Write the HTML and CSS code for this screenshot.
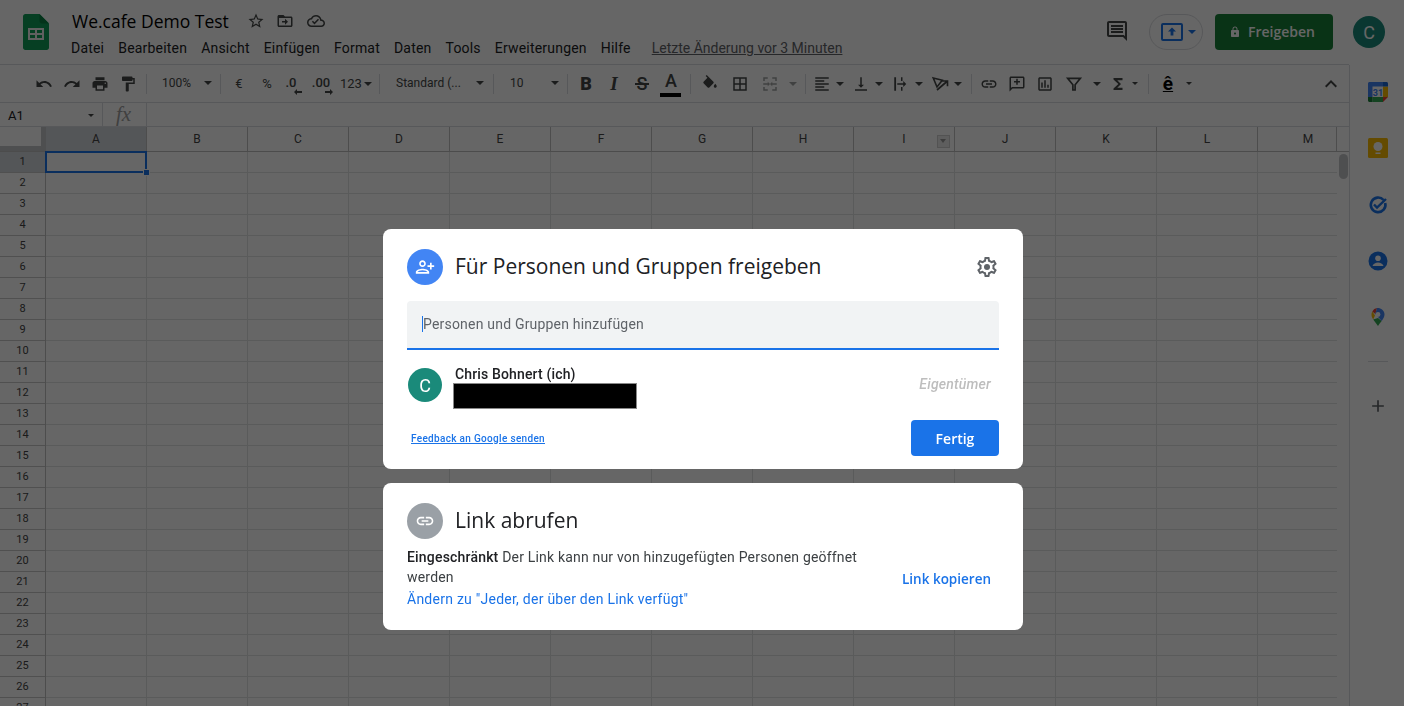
FILE: index.html
```html
<!DOCTYPE html>
<html lang="de">
<head>
    <meta charset="UTF-8">
    <title>We.cafe Demo Test</title>
    <link rel="stylesheet" href="styles.css">
</head>
<body>
<div class="app">
    <div class="main">
        <header class="topbar">
            <svg class="logo" viewBox="0 0 26 36">
                <path fill="#0f9d58" d="M16.5 0H2.4C1 0 0 1 0 2.4v31.2C0 35 1 36 2.4 36h21.2c1.4 0 2.4-1 2.4-2.4V9.500z"/>
                <path fill="#0b8043" d="M16.500 0v7.100c0 1.300 1.100 2.400 2.400 2.400H26z"/>
                <path fill="#f1f1f1" d="M5 14h16v12H5zm2 2v3h5v-3zm7 0v3h5v-3zm-7 5v3h5v-3zm7 0v3h5v-3z" fill-rule="evenodd"/>
            </svg>
            <div class="docinfo">
                <div class="titlerow">
                    <span class="doctitle">We.cafe Demo Test</span>
                    <svg class="ico18 star" viewBox="0 0 24 24"><path d="M22 9.240l-7.190-.62L12 2 9.190 8.630 2 9.240l5.460 4.730L5.820 21 12 17.270 18.180 21l-1.630-7.030L22 9.240zM12 15.400l-3.760 2.270 1-4.280-3.320-2.880 4.380-.38L12 6.100l1.710 4.040 4.380.38-3.320 2.880 1 4.280L12 15.400z"/></svg>
                    <svg class="ico18 move" viewBox="0 0 24 24"><path d="M20 6h-8l-2-2H4c-1.100 0-2 .9-2 2v12c0 1.100.9 2 2 2h16c1.100 0 2-.9 2-2V8c0-1.100-.9-2-2-2zm0 12H4V8h16v10zm-8-1l4-4-4-4v3H8v2h4z"/></svg>
                    <svg class="ico18 cloud" viewBox="0 0 24 24"><path d="M19.350 10.040C18.670 6.590 15.640 4 12 4 9.110 4 6.600 5.640 5.350 8.040 2.340 8.360 0 10.910 0 14c0 3.310 2.690 6 6 6h13c2.760 0 5-2.240 5-5 0-2.640-2.050-4.780-4.650-4.960zM19 18H6c-2.210 0-4-1.790-4-4 0-2.050 1.530-3.760 3.560-3.970l1.070-.11.5-.95C8.080 7.140 9.940 6 12 6c2.620 0 4.880 1.860 5.390 4.430l.3 1.500 1.530.11c1.560.1 2.780 1.410 2.780 2.960 0 1.650-1.350 3-3 3zm-9-1.500l-3.500-3.500 1.410-1.410L10 13.680l4.600-4.600 1.410 1.410z"/></svg>
                </div>
                <nav class="menubar">
                    <span>Datei</span><span>Bearbeiten</span><span>Ansicht</span><span>Einfügen</span><span>Format</span><span>Daten</span><span>Tools</span><span>Erweiterungen</span><span>Hilfe</span>
                    <a class="lastedit">Letzte Änderung vor 3 Minuten</a>
                </nav>
            </div>
            <div class="topright">
                <svg class="ico24 comments" viewBox="0 0 24 24"><path d="M21.990 4c0-1.100-.89-2-1.990-2H4c-1.100 0-2 .9-2 2v12c0 1.100.9 2 2 2h14l4 4-.01-18zM20 4v13.170L18.830 16H4V4h16zM6 12h12v2H6zm0-3h12v2H6zm0-3h12v2H6z"/></svg>
                <div class="present">
                    <svg class="present-ico" viewBox="0 0 22 18"><rect x="1" y="1" width="20" height="16" rx="1" fill="none" stroke="#1a73e8" stroke-width="2"/><path fill="#1a73e8" d="M11 4.500l4 4h-2.600v4h-2.800v-4H7z"/></svg>
                    <i class="caret blue"></i>
                </div>
                <button class="share">
                    <svg class="lock" viewBox="0 0 24 24"><path d="M18 8h-1V6c0-2.760-2.240-5-5-5S7 3.240 7 6v2H6c-1.100 0-2 .9-2 2v10c0 1.100.9 2 2 2h12c1.100 0 2-.9 2-2V10c0-1.100-.9-2-2-2zm-6 9c-1.100 0-2-.9-2-2s.9-2 2-2 2 .9 2 2-.9 2-2 2zm3.100-9H8.900V6c0-1.710 1.390-3.100 3.100-3.100 1.710 0 3.100 1.390 3.100 3.100v2z"/></svg>
                    <span>Freigeben</span>
                </button>
                <div class="avatar top-avatar">C</div>
            </div>
        </header>

        <div class="toolbar">
            <span class="tb"><svg class="ico18" viewBox="0 0 24 24"><path d="M12.500 8c-2.650 0-5.050.99-6.900 2.600L2 7v9h9l-3.620-3.620c1.390-1.160 3.160-1.880 5.120-1.880 3.540 0 6.550 2.310 7.600 5.500l2.370-.78C21.080 11.030 17.150 8 12.500 8z"/></svg></span>
            <span class="tb"><svg class="ico18" viewBox="0 0 24 24"><path d="M18.400 10.600C16.550 8.990 14.150 8 11.500 8c-4.650 0-8.580 3.030-9.960 7.220L3.900 16c1.050-3.190 4.050-5.500 7.600-5.500 1.950 0 3.730.72 5.120 1.880L13 16h9V7l-3.600 3.600z"/></svg></span>
            <span class="tb"><svg class="ico18" viewBox="0 0 24 24"><path d="M19 8H5c-1.660 0-3 1.340-3 3v6h4v4h12v-4h4v-6c0-1.660-1.340-3-3-3zm-3 11H8v-5h8v5zm3-7c-.55 0-1-.45-1-1s.45-1 1-1 1 .45 1 1-.45 1-1 1zm-1-9H6v4h12V3z"/></svg></span>
            <span class="tb"><svg class="ico18" viewBox="0 0 24 24"><path d="M18 4V3c0-.55-.45-1-1-1H5c-.55 0-1 .45-1 1v4c0 .55.45 1 1 1h12c.55 0 1-.45 1-1V6h1v4H9v11c0 .55.45 1 1 1h2c.55 0 1-.45 1-1v-9h8V4h-3z"/></svg></span>
            <i class="sep"></i>
            <span class="select zoomsel"><span>100%</span><i class="caret"></i></span>
            <i class="sep"></i>
            <span class="tb tbtext">€</span>
            <span class="tb tbtext">%</span>
            <span class="tb tbtext dec dec-less">.0<svg class="dec-arrow" viewBox="0 0 8 6"><path d="M0 3l3-3v2h5v2H3v2z"/></svg></span>
            <span class="tb tbtext dec dec-more">.00<svg class="dec-arrow" viewBox="0 0 8 6"><path d="M8 3L5 0v2H0v2h5v2z"/></svg></span>
            <span class="tb tbtext numfmt">123<i class="caret"></i></span>
            <i class="sep"></i>
            <span class="select fontsel"><span>Standard (...</span><i class="caret"></i></span>
            <i class="sep"></i>
            <span class="select sizesel"><span>10</span><i class="caret"></i></span>
            <i class="sep"></i>
            <span class="tb fmt fmt-b">B</span>
            <span class="tb fmt fmt-i">I</span>
            <span class="tb fmt fmt-s">S</span>
            <span class="tb fmt fmt-a">A<i class="colorbar"></i></span>
            <i class="sep"></i>
            <span class="tb wide"><svg class="ico18" viewBox="0 0 24 24"><path d="M16.560 8.940L7.620 0 6.210 1.410l2.380 2.380-5.150 5.150c-.59.59-.59 1.540 0 2.120l5.500 5.500c.29.29.68.44 1.060.44s.77-.15 1.060-.44l5.500-5.500c.59-.58.59-1.530 0-2.120zM19 11.500s-2 2.170-2 3.500c0 1.100.9 2 2 2s2-.9 2-2c0-1.330-2-3.500-2-3.500z"/></svg></span>
            <span class="tb wide"><svg class="ico18" viewBox="0 0 24 24"><path d="M3 3v18h18V3H3zm8 16H5v-6h6v6zm0-8H5V5h6v6zm8 8h-6v-6h6v6zm0-8h-6V5h6v6z"/></svg></span>
            <span class="tb wide dim"><svg class="ico18" viewBox="0 0 24 24"><path d="M3 3h6v2H5v3H3zm12 0h6v5h-2V5h-4zM3 16h2v3h4v2H3zm16 0h2v5h-6v-2h4zM3 11h6V9l3 3-3 3v-2H3zm18 0h-6V9l-3 3 3 3v-2h6z"/></svg></span>
            <span class="tbcaret w16 dim"><i class="caret"></i></span>
            <i class="sep"></i>
            <span class="pair">
                <span class="tb narrow"><svg class="ico18" viewBox="0 0 24 24"><path d="M3 3h18v2H3zm0 4h12v2H3zm0 4h18v2H3zm0 4h12v2H3zm0 4h18v2H3z"/></svg></span>
                <span class="tbcaret w12"><i class="caret"></i></span>
            </span>
            <span class="pair">
                <span class="tb narrow"><svg class="ico18" viewBox="0 0 24 24"><path d="M16 13h-3V3h-2v10H8l4 4 4-4zM4 19v2h16v-2H4z"/></svg></span>
                <span class="tbcaret w12"><i class="caret"></i></span>
            </span>
            <span class="pair">
                <span class="tb narrow"><svg class="ico18" viewBox="0 0 24 24"><path d="M3 3h2.400v18H3zm9 0h2v5h-2zm0 13h2v5h-2zM7 11h8V8l4 4-4 4v-3H7z"/></svg></span>
                <span class="tbcaret w12"><i class="caret"></i></span>
            </span>
            <span class="pair">
                <span class="tb narrow"><svg class="ico18" viewBox="0 0 24 24"><path class="line-ico" d="M3 4l12 3-7 9zM8 20L22 8M14 8h8v7"/></svg></span>
                <span class="tbcaret w12"><i class="caret"></i></span>
            </span>
            <i class="sep sep-rot"></i>
            <span class="tb w27"><svg class="ico18" viewBox="0 0 24 24"><path d="M3.900 12c0-1.710 1.390-3.100 3.100-3.100h4V7H7c-2.760 0-5 2.240-5 5s2.240 5 5 5h4v-1.900H7c-1.710 0-3.100-1.390-3.100-3.100zM8 13h8v-2H8v2zm9-6h-4v1.900h4c1.710 0 3.100 1.390 3.100 3.100s-1.390 3.100-3.100 3.100h-4V17h4c2.760 0 5-2.240 5-5s-2.240-5-5-5z"/></svg></span>
            <span class="tb"><svg class="ico18" viewBox="0 0 24 24"><path d="M20 2H4c-1.100 0-2 .9-2 2v18l4-4h14c1.100 0 2-.9 2-2V4c0-1.100-.9-2-2-2zm0 14H5.170L4 17.170V4h16v12zM11 5h2v3h3v2h-3v3h-2v-3H8V8h3z"/></svg></span>
            <span class="tb"><svg class="ico18" viewBox="0 0 24 24"><path d="M19 3H5c-1.100 0-2 .9-2 2v14c0 1.100.9 2 2 2h14c1.100 0 2-.9 2-2V5c0-1.100-.9-2-2-2zm0 16H5V5h14v14zM7 10h2v7H7zm4-3h2v10h-2zm4 6h2v4h-2z"/></svg></span>
            <span class="tb wide"><svg class="ico18" viewBox="0 0 24 24"><path class="line-ico" d="M3.500 4.500h17l-7 8.500v7h-3v-7z"/></svg></span>
            <span class="tbcaret w16"><i class="caret"></i></span>
            <span class="tb w26"><svg class="ico18" viewBox="0 0 24 24"><path d="M18 4H6v2l6.500 6L6 18v2h12v-3h-7l5-5-5-5h7z"/></svg></span>
            <span class="tbcaret w8 smallgap"><i class="caret small"></i></span>
            <i class="sep"></i>
            <span class="tb wide input-tool">ê</span>
            <span class="tbcaret w12"><i class="caret small"></i></span>
            <svg class="ico24 collapse" viewBox="0 0 24 24"><path d="M7.410 15.410L12 10.830l4.590 4.580L18 14l-6-6-6 6z"/></svg>
        </div>

        <div class="formulabar">
            <div class="namebox"><span>A1</span><i class="caret small"></i></div>
            <div class="fx">fx</div>
        </div>

        <div class="sheet">
            <div class="colheads">
                <div class="corner"></div>
                <div class="colhead active">A</div>
                <div class="colhead">B</div>
                <div class="colhead">C</div>
                <div class="colhead">D</div>
                <div class="colhead">E</div>
                <div class="colhead">F</div>
                <div class="colhead">G</div>
                <div class="colhead">H</div>
                <div class="colhead">I<span class="colmenu"></span></div>
                <div class="colhead">J</div>
                <div class="colhead">K</div>
                <div class="colhead">L</div>
                <div class="colhead">M</div>
                <div class="colhead"></div>
            </div>
            <div class="gridbody">
                <div class="rowheads">
                    <div class="rowhead active">1</div>
                    <div class="rowhead">2</div>
                    <div class="rowhead">3</div>
                    <div class="rowhead">4</div>
                    <div class="rowhead">5</div>
                    <div class="rowhead">6</div>
                    <div class="rowhead">7</div>
                    <div class="rowhead">8</div>
                    <div class="rowhead">9</div>
                    <div class="rowhead">10</div>
                    <div class="rowhead">11</div>
                    <div class="rowhead">12</div>
                    <div class="rowhead">13</div>
                    <div class="rowhead">14</div>
                    <div class="rowhead">15</div>
                    <div class="rowhead">16</div>
                    <div class="rowhead">17</div>
                    <div class="rowhead">18</div>
                    <div class="rowhead">19</div>
                    <div class="rowhead">20</div>
                    <div class="rowhead">21</div>
                    <div class="rowhead">22</div>
                    <div class="rowhead">23</div>
                    <div class="rowhead">24</div>
                    <div class="rowhead">25</div>
                    <div class="rowhead">26</div>
                    <div class="rowhead">27</div>
                </div>
                <div class="cells">
                    <div class="selection"><i class="handle"></i></div>
                </div>
                <div class="vscroll"><div class="thumb"></div></div>
            </div>
        </div>
    </div>

    <aside class="sidepanel">
        <svg class="sideico" viewBox="0 0 20 20">
            <rect width="20" height="20" rx="1.500" fill="#fff"/>
            <path fill="#4285f4" d="M1.500 0H15v4.500H4.500V15H0V1.500C0 .7.700 0 1.500 0z"/>
            <path fill="#fbbc04" d="M15 4.500h5V15h-5z"/>
            <path fill="#1967d2" d="M15 0h3.500c.8 0 1.500.7 1.500 1.500v3h-5z"/>
            <path fill="#34a853" d="M4.500 15H15v5H4.500z"/>
            <path fill="#188038" d="M0 15h4.500v5H1.500C.7 20 0 19.300 0 18.500z"/>
            <path fill="#ea4335" d="M15 15h5l-5 5z"/>
            <text class="caldate" x="10" y="13.500" text-anchor="middle">31</text>
        </svg>
        <svg class="sideico" viewBox="0 0 20 20">
            <rect width="20" height="20" rx="1.500" fill="#fbbc04"/>
            <circle cx="10" cy="8.500" r="4.500" fill="#fff"/>
            <rect x="7.500" y="14.500" width="5" height="1.500" fill="#fff"/>
        </svg>
        <svg class="sideico" viewBox="0 0 20 20">
            <path fill="none" stroke="#1a73e8" stroke-width="2.600" d="M15.600 5a7.300 7.300 0 1 0 1.600 3"/>
            <path fill="none" stroke="#1a73e8" stroke-width="2.400" d="M6 9.500l3 3L18 4"/>
        </svg>
        <svg class="sideico" viewBox="0 0 20 20">
            <circle cx="10" cy="10" r="9.500" fill="#1a73e8"/>
            <circle cx="10" cy="7.300" r="2.800" fill="#fff"/>
            <path fill="#fff" d="M4.500 15c.6-2.400 3.200-3.600 5.500-3.600s4.900 1.200 5.500 3.600z"/>
        </svg>
        <svg class="sideico" viewBox="0 0 20 20">
            <path fill="#34a853" d="M5.200 12.500L10 19c.9-1.600 2.300-3.300 3.700-5l-3.700-3z"/>
            <path fill="#fbbc04" d="M4.300 4.500L7 8.500l-1.800 4C4.200 11 3.500 9.500 3.500 7.500c0-1.100.3-2.100.8-3z"/>
            <path fill="#ea4335" d="M4.300 4.500A6.500 6.500 0 0 1 9 1.100L7.300 7z"/>
            <path fill="#4285f4" d="M9 1.100c3.500-.4 7.500 2.400 7.500 6.400 0 2.400-1.500 4.500-2.800 6.500L7.300 7z"/>
            <circle cx="10" cy="7.500" r="2.400" fill="#fff"/>
        </svg>
        <div class="sidedivider"></div>
        <svg class="plus" viewBox="0 0 24 24"><path d="M19 13h-6v6h-2v-6H5v-2h6V5h2v6h6z"/></svg>
    </aside>
</div>

<div class="scrim"></div>

<div class="sharedialog">
    <section class="card">
        <div class="cardhead">
            <div class="cardico blue-ico">
                <svg viewBox="0 0 24 24"><path transform="matrix(-1 0 0 1 24 0)" d="M15 12c2.210 0 4-1.790 4-4s-1.790-4-4-4-4 1.790-4 4 1.790 4 4 4zm0-6c1.100 0 2 .9 2 2s-.9 2-2 2-2-.9-2-2 .9-2 2-2zm0 8c-2.670 0-8 1.340-8 4v2h16v-2c0-2.660-5.330-4-8-4zm-6 4c.22-.72 3.310-2 6-2 2.700 0 5.800 1.290 6 2H9zm-3-3v-3h3v-2H6V7H4v3H1v2h3v3h2z"/></svg>
            </div>
            <h2>Für Personen und Gruppen freigeben</h2>
            <svg class="gear" viewBox="0 0 24 24"><path d="M19.430 12.980c.04-.32.07-.64.07-.98 0-.34-.03-.66-.07-.98l2.110-1.650c.19-.15.24-.42.12-.64l-2-3.460c-.09-.16-.26-.25-.44-.25-.06 0-.12.01-.17.03l-2.490 1c-.52-.4-1.080-.73-1.690-.98l-.38-2.650C14.460 2.180 14.250 2 14 2h-4c-.25 0-.46.18-.49.42l-.38 2.650c-.61.25-1.170.59-1.690.98l-2.490-1c-.06-.02-.12-.03-.18-.03-.17 0-.34.09-.43.25l-2 3.460c-.13.22-.07.49.12.64l2.110 1.650c-.04.32-.07.65-.07.98 0 .33.03.66.07.98l-2.110 1.650c-.19.15-.24.42-.12.64l2 3.460c.09.16.26.25.44.25.06 0 .12-.01.17-.03l2.490-1c.52.4 1.080.73 1.690.98l.38 2.650c.03.24.24.42.49.42h4c.25 0 .46-.18.49-.42l.38-2.650c.61-.25 1.170-.59 1.690-.98l2.490 1c.06.02.12.03.18.03.17 0 .34-.09.43-.25l2-3.460c.12-.22.07-.49-.12-.64l-2.110-1.650zm-1.980-1.710c.04.31.05.52.05.73 0 .21-.02.43-.05.73l-.14 1.130.89.7 1.080.84-.7 1.210-1.270-.51-1.040-.42-.9.68c-.43.32-.84.56-1.250.73l-1.060.43-.16 1.130-.2 1.350h-1.400l-.19-1.350-.16-1.130-1.060-.43c-.43-.18-.83-.41-1.230-.71l-.91-.7-1.060.43-1.270.51-.7-1.210 1.080-.84.89-.7-.14-1.130c-.03-.31-.05-.54-.05-.74s.02-.43.05-.73l.14-1.130-.89-.7-1.080-.84.7-1.210 1.270.51 1.040.42.9-.68c.43-.32.84-.56 1.250-.73l1.060-.43.16-1.130.2-1.350h1.390l.19 1.350.16 1.130 1.060.43c.43.18.83.41 1.230.71l.91.7 1.060-.43 1.270-.51.7 1.210-1.070.85-.89.7.14 1.130z"/><circle cx="12" cy="12" r="3"/></svg>
        </div>
        <div class="addfield"><i class="textcursor"></i><span>Personen und Gruppen hinzufügen</span></div>
        <div class="person">
            <div class="avatar person-avatar">C</div>
            <div class="persontext">
                <div class="personname">Chris Bohnert (ich)</div>
                <div class="redacted"></div>
            </div>
            <div class="role">Eigentümer</div>
        </div>
        <div class="cardfoot">
            <a class="feedback">Feedback an Google senden</a>
            <button class="done">Fertig</button>
        </div>
    </section>

    <section class="card linkcard">
        <div class="cardhead">
            <div class="cardico gray-ico">
                <svg viewBox="0 0 24 24"><path d="M3.900 12c0-1.710 1.390-3.100 3.100-3.100h4V7H7c-2.760 0-5 2.240-5 5s2.240 5 5 5h4v-1.900H7c-1.710 0-3.100-1.390-3.100-3.100zM8 13h8v-2H8v2zm9-6h-4v1.900h4c1.710 0 3.100 1.390 3.100 3.100s-1.390 3.100-3.100 3.100h-4V17h4c2.760 0 5-2.240 5-5s-2.240-5-5-5z"/></svg>
            </div>
            <h2>Link abrufen</h2>
        </div>
        <div class="linkbody">
            <div class="linktext">
                <p><b>Eingeschränkt</b> Der Link kann nur von hinzugefügten Personen geöffnet werden</p>
                <a class="changelink">Ändern zu "Jeder, der über den Link verfügt"</a>
            </div>
            <a class="copylink">Link kopieren</a>
        </div>
    </section>
</div>
</body>
</html>
```

FILE: styles.css
```css
* {
    margin: 0;
    padding: 0;
    box-sizing: border-box;
}
html, body {
    width: 1404px;
    height: 706px;
    overflow: hidden;
}
body {
    font-family: Roboto, "Liberation Sans", sans-serif;
    color: #202124;
    background: #fff;
}
i {
    font-style: normal;
}
svg {
    display: block;
    fill: #444746;
}
.line-ico {
    fill: none;
    stroke: #444746;
    stroke-width: 2.200;
}
.app {
    display: flex;
    height: 706px;
}
.main {
    width: 1349px;
    display: flex;
    flex-direction: column;
}

/* title bar */
.topbar {
    height: 65px;
    display: flex;
    border-bottom: 1px solid #dadce0;
    padding-left: 23px;
    flex: none;
    position: relative;
}
.logo {
    width: 26px;
    height: 36px;
    margin-top: 14px;
}
.docinfo {
    margin-left: 22px;
    padding-top: 10px;
}
.titlerow {
    display: flex;
    align-items: center;
    height: 22px;
    margin-left: 1px;
}
.doctitle {
    font-family: "Open Sans", sans-serif;
    font-size: 17.500px;
    color: #000;
}
.ico18 {
    width: 18px;
    height: 18px;
}
.ico24 {
    width: 24px;
    height: 24px;
}
.star {
    margin-left: 18px;
}
.move {
    margin-left: 11px;
}
.cloud {
    margin-left: 13px;
}
.menubar {
    display: flex;
    align-items: center;
    margin-top: 6px;
    font-size: 14px;
    height: 20px;
}
.menubar span {
    margin-right: 14px;
    letter-spacing: .2px;
}
.lastedit {
    margin-left: 7px;
    text-decoration: underline;
    color: #5f6368;
}
.topright {
    display: flex;
    align-items: flex-start;
    position: absolute;
    left: 1105px;
    top: 14px;
    width: 280px;
}
.comments {
    margin-top: 5px;
}
.present {
    width: 54px;
    height: 36px;
    margin-left: 20px;
    border: 1px solid #dadce0;
    border-radius: 18px;
    display: flex;
    align-items: center;
    padding-left: 11px;
}
.present-ico {
    width: 22px;
    height: 18px;
    margin-right: 5px;
}
.share {
    width: 118px;
    height: 36px;
    margin-left: 12px;
    background: #188038;
    border: 0;
    border-radius: 4px;
    color: #fff;
    font-family: "Open Sans", sans-serif;
    font-size: 14px;
    font-weight: 600;
    display: flex;
    align-items: center;
    padding-left: 14px;
}
.share span {
    margin-top: -2px;
}
.lock {
    width: 12px;
    height: 12px;
    margin-right: 7px;
    fill: #fff;
}
.avatar {
    border-radius: 50%;
    background: #1a8a7a;
    color: #fff;
    display: flex;
    align-items: center;
    justify-content: center;
    flex: none;
}
.top-avatar {
    width: 32px;
    height: 32px;
    margin-left: 20px;
    margin-top: 2px;
    font-size: 18px;
}

/* toolbar */
.toolbar {
    height: 38px;
    display: flex;
    align-items: center;
    padding-left: 30px;
    padding-right: 4px;
    border-bottom: 1px solid #dadce0;
    flex: none;
    color: #444746;
}
.tb {
    width: 28px;
    height: 26px;
    display: flex;
    align-items: center;
    justify-content: center;
    flex: none;
    position: relative;
}
.tb.wide {
    width: 30px;
}
.tb.narrow {
    width: 24px;
}
.tb.w27 {
    width: 27px;
}
.tb.w26 {
    width: 26px;
}
.tbtext {
    font-size: 13px;
}
.dec {
    padding-bottom: 2px;
    font-weight: 500;
}
.dec-less {
    padding-right: 8px;
}
.dec-less .dec-arrow {
    right: 7px;
}
.dec-more {
    padding-right: 4px;
}
.dec-more .dec-arrow {
    right: 4px;
}
.dec-arrow {
    width: 8px;
    height: 6px;
    position: absolute;
    bottom: 2px;
}
.numfmt {
    width: 38px;
    font-size: 13px;
    justify-content: flex-start;
    padding-left: 3px;
}
.numfmt .caret {
    margin-left: 2px;
}
.sep {
    width: 1px;
    height: 20px;
    margin: 0 4px;
    background: #dadce0;
    flex: none;
}
.select {
    height: 26px;
    display: flex;
    align-items: center;
    justify-content: space-between;
    font-size: 12px;
    flex: none;
    padding-bottom: 1px;
}
.zoomsel {
    width: 65px;
    padding-left: 11px;
    padding-right: 4px;
}
.fontsel {
    width: 105px;
    padding-left: 12px;
    padding-right: 5px;
}
.sizesel {
    width: 65px;
    padding-left: 12px;
    padding-right: 4px;
}
.caret {
    display: block;
    width: 0;
    height: 0;
    border-left: 4px solid transparent;
    border-right: 4px solid transparent;
    border-top: 4px solid #444746;
}
.caret.small {
    border-left-width: 3px;
    border-right-width: 3px;
    border-top-width: 3px;
}
.caret.blue {
    border-top-color: #1a73e8;
}
.tbcaret {
    height: 26px;
    display: flex;
    align-items: center;
    justify-content: center;
    flex: none;
}
.w16 {
    width: 16px;
}
.w12 {
    width: 12px;
}
.w8 {
    width: 8px;
}
.smallgap {
    margin-right: 5px;
}
.pair {
    display: flex;
    width: 39.330px;
    flex: none;
}
.sep-rot {
    margin-left: 3.680px;
}
.fmt {
    font-size: 18px;
}
.fmt-b {
    font-weight: 900;
}
.fmt-i {
    font-family: "Liberation Serif", serif;
    font-style: italic;
    font-weight: 700;
    font-size: 19px;
}
.fmt-s {
    font-weight: 500;
}
.fmt-s::after {
    content: "";
    position: absolute;
    left: 7px;
    top: 12px;
    width: 14px;
    height: 2px;
    background: #444746;
}
.fmt-a {
    width: 30px;
    padding-bottom: 7px;
    font-weight: 500;
}
.colorbar {
    position: absolute;
    left: 4px;
    bottom: 0;
    width: 21px;
    height: 4px;
    background: #000;
}
.dim {
    opacity: .5;
}
.input-tool {
    font-size: 19px;
    font-weight: 700;
    color: #000;
    text-decoration: underline;
}
.collapse {
    margin-left: auto;
    margin-right: 2px;
}

/* formula bar */
.formulabar {
    height: 24px;
    display: flex;
    align-items: center;
    border-bottom: 1px solid #dadce0;
    flex: none;
}
.namebox {
    width: 103px;
    height: 23px;
    padding: 1px 8px 0;
    display: flex;
    align-items: center;
    justify-content: space-between;
    font-size: 13px;
    border-right: 1px solid #dadce0;
}
.fx {
    width: 44px;
    height: 23px;
    border-right: 1px solid #dadce0;
    font-family: "Liberation Serif", serif;
    font-style: italic;
    font-size: 21px;
    line-height: 22px;
    color: #a0a0a0;
    padding-left: 13px;
}

/* grid */
.sheet {
    flex: 1;
    display: flex;
    flex-direction: column;
    min-height: 0;
}
.colheads {
    display: grid;
    grid-template-columns: 46px repeat(12, 101px) 79px 12px;
    height: 25px;
    flex: none;
    border-bottom: 1px solid #bdbdbd;
    overflow: hidden;
}
.corner {
    border-right: 5px solid #c4c6c9;
    border-bottom: 5px solid #c4c6c9;
}
.colhead {
    border-right: 1px solid #c0c0c0;
    display: flex;
    align-items: center;
    justify-content: center;
    font-size: 12px;
    color: #444;
    position: relative;
}
.colhead:nth-last-child(2) {
    padding-left: 22px;
}
.colhead:last-child {
    border-right: 0;
}
.colhead.active {
    background: #d3d6db;
}
.colmenu {
    position: absolute;
    right: 4px;
    top: 8px;
    width: 13px;
    height: 13px;
    border: 1px solid #cfcfcf;
    background: #ececec;
}
.colmenu::after {
    content: "";
    position: absolute;
    left: 2px;
    top: 3px;
    border-left: 3.500px solid transparent;
    border-right: 3.500px solid transparent;
    border-top: 4px solid #9a9a9a;
}
.gridbody {
    flex: 1;
    display: flex;
    min-height: 0;
}
.rowheads {
    width: 46px;
    flex: none;
    border-right: 1px solid #c0c0c0;
}
.rowhead {
    height: 21px;
    border-bottom: 1px solid #c8c8c8;
    display: flex;
    align-items: center;
    justify-content: center;
    font-size: 11px;
    color: #444;
    padding-bottom: 2px;
}
.rowhead.active {
    background: #d3d6db;
}
.cells {
    flex: 1;
    position: relative;
    background-image:
        linear-gradient(to right, transparent 100px, #e2e3e3 100px),
        linear-gradient(to bottom, transparent 20px, #e2e3e3 20px);
    background-size: 101px 100%, 100% 21px;
}
.selection {
    position: absolute;
    left: -1px;
    top: -1px;
    width: 102px;
    height: 22px;
    border: 2px solid #1a73e8;
}
.handle {
    position: absolute;
    right: -5px;
    bottom: -5px;
    width: 7px;
    height: 7px;
    background: #1a73e8;
    border: 1px solid #fff;
}
.vscroll {
    width: 12px;
    flex: none;
    background: #fff;
    padding: 2px 1px 0 2px;
}
.thumb {
    height: 25px;
    border-radius: 5px;
    background: #c4c6c9;
}

/* side panel */
.sidepanel {
    flex: 1;
    margin-top: 65px;
    border-left: 1px solid #dadce0;
    display: flex;
    flex-direction: column;
    align-items: center;
    padding-top: 17px;
    padding-left: 2px;
}
.sideico {
    width: 20px;
    height: 20px;
    margin-bottom: 36.250px;
    flex: none;
}
.caldate {
    font-family: Roboto, sans-serif;
    font-size: 9px;
    font-weight: 700;
    fill: #4285f4;
}
.sidedivider {
    width: 20px;
    height: 1px;
    background: #dadce0;
    margin-top: -2px;
    margin-bottom: 34px;
}
.plus {
    width: 20px;
    height: 20px;
    fill: #5f6368;
}

/* dimmed page and share dialog */
.scrim {
    position: fixed;
    inset: 0;
    background: rgba(0, 0, 0, .6);
}
.sharedialog {
    position: absolute;
    left: 383px;
    top: 229px;
    width: 640px;
    display: flex;
    flex-direction: column;
    gap: 14px;
}
.card {
    height: 240px;
    background: #fff;
    border-radius: 8px;
    padding: 20px 24px 0;
}
.linkcard {
    height: 147px;
}
.cardhead {
    display: flex;
    align-items: center;
    height: 36px;
}
.cardhead h2 {
    font-family: "Open Sans", sans-serif;
    font-weight: 400;
    font-size: 21px;
    margin-left: 12px;
    margin-top: -2px;
    color: #202124;
}
.cardico {
    width: 36px;
    height: 36px;
    border-radius: 50%;
    display: flex;
    align-items: center;
    justify-content: center;
    flex: none;
}
.cardico svg {
    width: 20px;
    height: 20px;
    fill: #fff;
}
.blue-ico {
    background: #4285f4;
}
.gray-ico {
    background: #9aa0a6;
}
.gear {
    width: 24px;
    height: 24px;
    margin-left: auto;
    margin-right: 0;
    fill: #5f6368;
}
.addfield {
    height: 49px;
    margin-top: 16px;
    background: #f1f3f4;
    border-bottom: 2px solid #1a73e8;
    border-radius: 4px 4px 0 0;
    display: flex;
    align-items: center;
    padding-left: 15px;
    padding-bottom: 2px;
    font-size: 14px;
    color: #5f6368;
    letter-spacing: .2px;
}
.textcursor {
    width: 1px;
    height: 16px;
    background: #1a73e8;
}
.person {
    display: flex;
    height: 52px;
    margin-top: 16px;
    padding-left: 1px;
}
.person-avatar {
    width: 34px;
    height: 34px;
    font-size: 18px;
    margin-top: 2px;
}
.persontext {
    margin-left: 12px;
}
.personname {
    font-size: 14px;
    font-weight: 500;
    line-height: 16px;
    letter-spacing: .15px;
    margin-left: 1px;
}
.redacted {
    width: 184px;
    height: 26px;
    margin-top: 1px;
    background: #000;
    border: 1px solid #888;
    margin-left: -1px;
}
.role {
    margin-left: auto;
    margin-right: 8px;
    font-style: italic;
    font-weight: 500;
    font-size: 14px;
    letter-spacing: .2px;
    color: #bdbdbd;
    margin-top: 10px;
}
.cardfoot {
    display: flex;
    justify-content: space-between;
    align-items: center;
    margin-top: 2px;
}
.feedback {
    font-size: 10px;
    font-weight: 500;
    color: #1a73e8;
    text-decoration: underline;
    margin-left: 4px;
    letter-spacing: .32px;
}
.done {
    width: 88px;
    height: 36px;
    border: 0;
    border-radius: 4px;
    background: #1a73e8;
    color: #fff;
    font-family: "Open Sans", sans-serif;
    font-size: 14px;
    font-weight: 600;
}
.linkbody {
    display: flex;
    justify-content: space-between;
    align-items: center;
    margin-top: 8px;
}
.linktext {
    width: 470px;
    font-size: 14px;
    line-height: 20px;
    color: #3c4043;
    letter-spacing: .19px;
}
.linktext b {
    font-weight: 500;
    color: #202124;
}
.changelink {
    display: block;
    margin-top: 2px;
    font-size: 14px;
    letter-spacing: .25px;
    color: #1a73e8;
}
.copylink {
    font-family: "Open Sans", sans-serif;
    font-size: 13.500px;
    font-weight: 600;
    color: #1a73e8;
    margin-right: 8px;
    margin-top: 1px;
}
```
